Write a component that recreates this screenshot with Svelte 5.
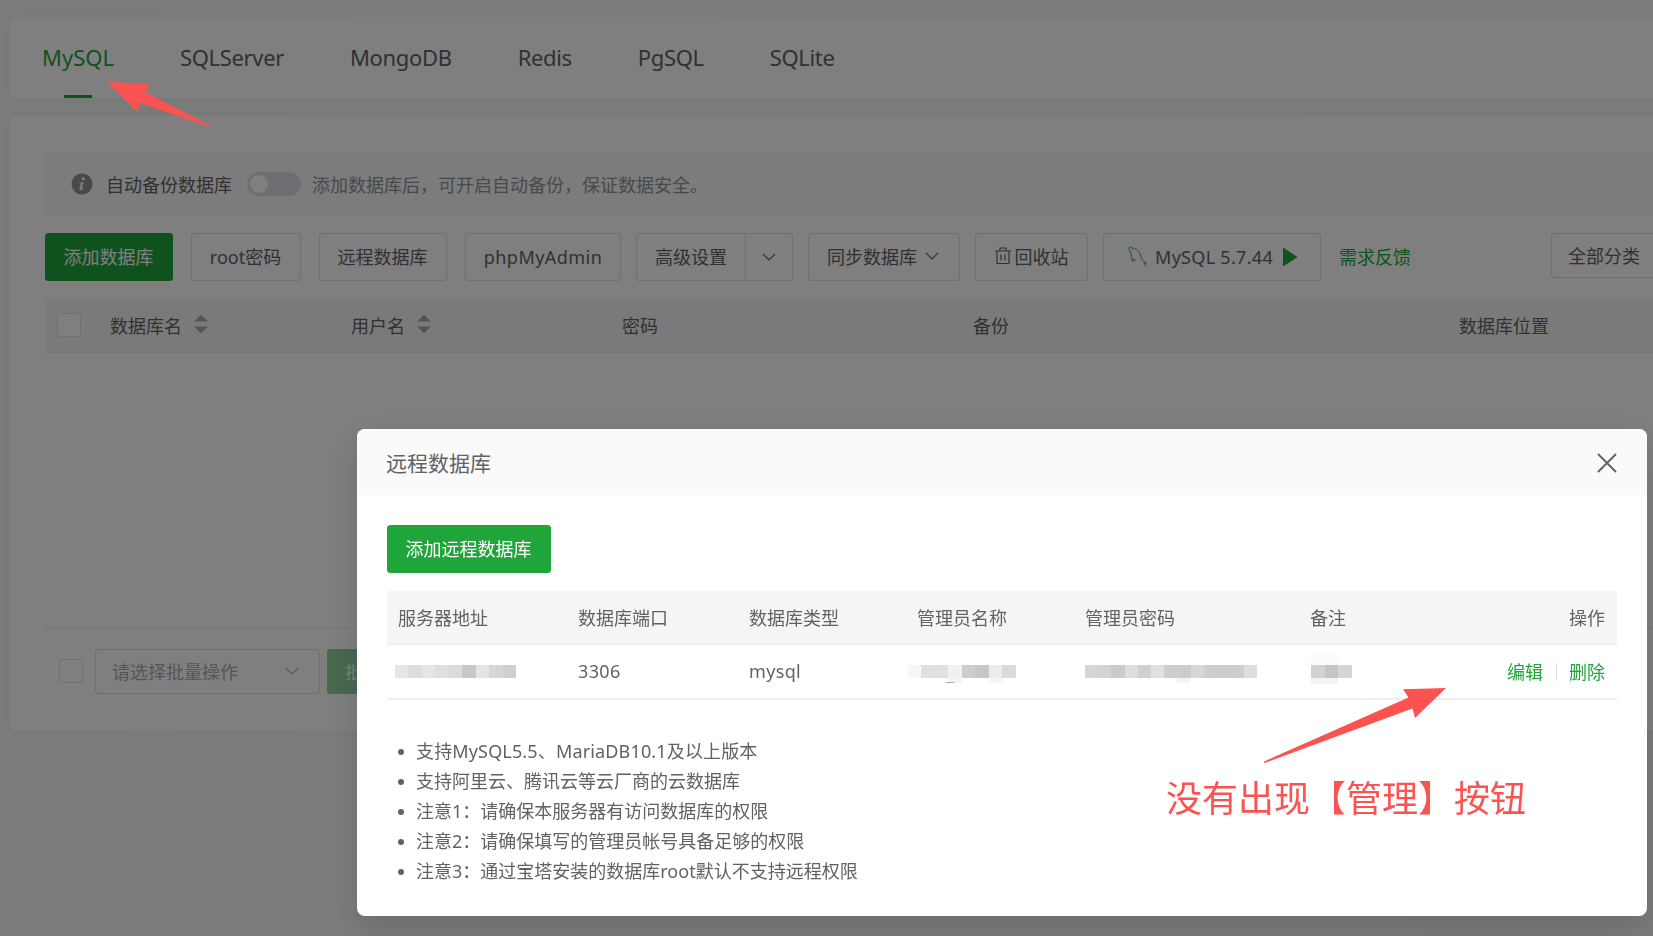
<script>
    let tabs = ['MySQL', 'SQLServer', 'MongoDB', 'Redis', 'PgSQL', 'SQLite'];
    let activeTab = 'MySQL';
    let autoBackup = false;
    let showRemote = true;

    let columns = [
        { label: '数据库名', sort: true },
        { label: '用户名', sort: true },
        { label: '密码' },
        { label: '备份' },
        { label: '数据库位置' }
    ];

    let remoteColumns = ['服务器地址', '数据库端口', '数据库类型', '管理员名称', '管理员密码', '备注', '操作'];

    // Masked values, one colour per block
    let maskHost = ['#e4e6e5', '#dddddd', '#e4e6e5', '#dfdfdf', '#dbdbdb', '#c8c8ca', '#e4e4e4', '#d6d6d6', '#cfd0d2'];
    let maskUser = ['#f7f7f7', '#dfe1e0', '#e0e2e1', '#f1f1f1', '#cccdcf', '#c6c7c9', '#eceeed', '#dadada'];
    let maskPass = ['#d5d6d8', '#d2d3d5', '#cacbcd', '#dddfde', '#d0d0d0', '#e0e0e0', '#cdcecf', '#cbccce', '#d6d7da', '#cdced0', '#cccdcf', '#cdced1', '#dddee0'];
    let maskNote = ['#d2d2d2', '#c4c5c7', '#d5d5d5'];

    let notes = [
        '支持MySQL5.5、MariaDB10.1及以上版本',
        '支持阿里云、腾讯云等云厂商的云数据库',
        '注意1：请确保本服务器有访问数据库的权限',
        '注意2：请确保填写的管理员帐号具备足够的权限',
        '注意3：通过宝塔安装的数据库root默认不支持远程权限'
    ];
</script>

{#snippet chevron()}
    <svg class="chevron" width="16" height="10" viewBox="0 0 16 10"><path d="M1.8 1.8 8 8l6.200-6.200" /></svg>
{/snippet}

{#snippet mask(cells)}
    <span class="mask">
        {#each cells as color}
            <i style={`background: ${color}`}></i>
        {/each}
    </span>
{/snippet}

<div class="page">
    <nav class="tabs">
        {#each tabs as tab}
            <button class="tab" class:active={tab === activeTab} on:click={() => (activeTab = tab)}>{tab}</button>
        {/each}
    </nav>

    <main class="panel">
        <div class="backup-bar">
            <svg class="info" width="22" height="22" viewBox="0 0 22 22">
                <circle cx="11" cy="11" r="10.500" />
                <circle class="mark" cx="12.300" cy="5.700" r="1.600" />
                <path class="mark" d="M8.300 9.400 12.700 8.900 11.100 15.100Q10.900 16 11.600 15.600L12.700 14.700 13.100 15.200Q11.300 17.400 9.500 17.300 8 17.100 8.500 15.200L9.700 10.500Q9.800 9.900 8.200 9.900Z" />
            </svg>
            <span class="backup-label">自动备份数据库</span>
            <span class="switch" class:on={autoBackup}></span>
            <span class="backup-hint">添加数据库后，可开启自动备份，保证数据安全。</span>
        </div>

        <div class="toolbar">
            <button class="btn primary add">添加数据库</button>
            <button class="btn root">root密码</button>
            <button class="btn remote">远程数据库</button>
            <button class="btn pma">phpMyAdmin</button>
            <div class="btn split">
                <span>高级设置</span>
                <span class="split-arrow">{@render chevron()}</span>
            </div>
            <button class="btn sync">同步数据库{@render chevron()}</button>
            <button class="btn bin">
                <svg class="trash" width="16" height="18" viewBox="0 0 16 18"><path d="M0 4h16M5 3.500V1h6v2.500M2 4v12.500h12V4M6 7.500v6M10 7.500v6" /></svg>
                回收站
            </button>
            <button class="btn version">
                <svg class="dolphin" width="20" height="21" viewBox="0 0 20 21">
                    <path d="M4.500 15.500C3.900 13.700 4 12 3.500 10.300 3 8.500 2.800 7 1.800 5.200 1.300 3.600.6 2.800 1.200 1.500 2.200.6 3.200 1.600 4.200 2.200 7.500 1.800 10 4.300 11.600 7.200 12.600 9.200 13 11.800 14.500 14 15.500 15.300 17.500 15.800 18.300 17.200L15.900 17.300 18.600 20.200M4.500 15.500 6.100 13 7.500 15.400M4.200 4.300 5 4.600" />
                </svg>
                <span>MySQL 5.7.44</span>
                <svg class="play" width="16" height="20" viewBox="0 0 16 20"><path d="M1 .5 15.500 10 1 19.500Z" /></svg>
            </button>
            <a class="feedback" href="#feedback">需求反馈</a>
            <div class="category">全部分类</div>
        </div>

        <div class="table-head">
            <span class="checkbox"></span>
            {#each columns as col}
                <span class="th">
                    {col.label}
                    {#if col.sort}
                        <svg class="sort" width="14" height="20" viewBox="0 0 14 20"><path d="M0 7.500 7 .5l7 7ZM0 12.500 7 19.500l7-7Z" /></svg>
                    {/if}
                </span>
            {/each}
        </div>
        <div class="table-empty"></div>

        <div class="batch">
            <span class="checkbox"></span>
            <div class="batch-select">请选择批量操作 {@render chevron()}</div>
            <button class="batch-btn">批量操作</button>
        </div>
    </main>
</div>

{#if showRemote}
    <div class="overlay">
        <div class="dialog">
            <header>
                <span>远程数据库</span>
                <svg class="close" width="20" height="20" viewBox="0 0 20 20"><path d="M1.500 1.500l17 17M18.500 1.500l-17 17" /></svg>
            </header>
            <div class="dialog-body">
                <button class="btn primary add-remote">添加远程数据库</button>

                <div class="row head">
                    {#each remoteColumns as label}
                        <span>{label}</span>
                    {/each}
                </div>
                <div class="row data">
                    <span class="cell-host">{@render mask(maskHost)}</span>
                    <span class="value">3306</span>
                    <span class="value">mysql</span>
                    <span class="cell-user">{@render mask(maskUser)}<i class="smudge s1"></i><i class="smudge s2"></i><i class="dash"></i></span>
                    <span class="cell-pass">{@render mask(maskPass)}<i class="smudge s3"></i></span>
                    <span class="cell-note">{@render mask(maskNote)}<i class="smudge s4"></i><i class="smudge s5"></i></span>
                    <span class="actions"><a href="#edit">编辑</a><i class="sep"></i><a href="#delete">删除</a></span>
                </div>

                <ul>
                    {#each notes as note}
                        <li>{note}</li>
                    {/each}
                </ul>
            </div>
        </div>
    </div>
{/if}

<div class="marks">
    <svg width="1653" height="936" viewBox="0 0 1653 936">
        <path d="M107 82 150 83.700 145 92 210.500 125.500 210 127 140 103 138 112Z" />
        <path d="M1446 688 1403 689.300 1408.500 697.500 1264 761.500 1264.500 763 1412.500 708.500 1415 718Z" />
    </svg>
    <span class="remark">没有出现【管理】按钮</span>
</div>

<style>
:global(body) {
    margin: 0;
    overflow: hidden;
    background: linear-gradient(90deg, #f3f8f6, #f7f8f7 30%, #f6f7f6);
    font-family: "Noto Sans", "Noto Sans CJK SC", sans-serif;
    font-size: 18px;
    color: #606266;
}

* {
    box-sizing: border-box;
}

button {
    font: inherit;
    color: inherit;
    background: none;
    border: 0;
    padding: 0;
    white-space: nowrap;
}

a {
    color: #20a53a;
    text-decoration: none;
}

svg {
    flex: none;
    fill: none;
}

.page {
    width: 1700px;
    height: 936px;
    padding: 17px 0 0 9px;
    overflow: hidden;
}

.tabs {
    display: flex;
    height: 81px;
    background: #fff;
    border-radius: 8px;
    box-shadow: 0 0 8px rgba(0, 0, 0, 0.04);
}
.tab {
    position: relative;
    padding: 0 33px 1px;
    font-size: 22px;
    letter-spacing: -0.34px;
}
.tab.active {
    color: #20a53a;
    letter-spacing: 0;
}
.tab.active::after {
    content: '';
    position: absolute;
    bottom: 0;
    left: 50%;
    width: 28px;
    height: 3px;
    margin-left: -14px;
    background: #20a53a;
}

.panel {
    height: 615px;
    margin-top: 18px;
    padding: 36px 0 0 36px;
    background: #fff;
    border-radius: 8px;
    box-shadow: 0 0 8px rgba(0, 0, 0, 0.04);
}

.backup-bar {
    display: flex;
    align-items: center;
    height: 63px;
    padding-left: 25px;
    background: #f8f8f8;
    border: 1px solid #eee;
    border-radius: 3px;
}
.info {
    margin-right: 13px;
    fill: #909399;
}
.info .mark {
    fill: #f8f8f8;
}
.switch {
    width: 54px;
    height: 24px;
    margin: 0 11px 0 15px;
    padding: 3px;
    background: #dcdfe6;
    border-radius: 12px;
}
.switch::after {
    content: '';
    display: block;
    width: 18px;
    height: 18px;
    background: #fff;
    border-radius: 50%;
}
.switch.on {
    background: #20a53a;
}
.backup-hint {
    color: #909399;
}

.toolbar {
    display: flex;
    height: 48px;
    margin-top: 18px;
}
.btn {
    display: flex;
    align-items: center;
    justify-content: center;
    height: 48px;
    margin-right: 15px;
    padding: 0 1px 2px 0;
    border: 1px solid #dcdfe6;
    border-radius: 3px;
}
.btn.primary {
    color: #fff;
    background: #20a53a;
    border-color: #20a53a;
}
.add {
    width: 128px;
    margin-right: 18px;
}
.root {
    width: 110px;
    margin-right: 18px;
}
.remote {
    width: 128px;
    margin-right: 18px;
}
.btn.pma {
    width: 156px;
    padding: 0;
    letter-spacing: 0.45px;
}
.split {
    width: 157px;
    justify-content: flex-start;
    padding-left: 18px;
}
.split-arrow {
    display: flex;
    align-items: center;
    justify-content: center;
    height: 48px;
    flex: 1;
    margin: 2px 0 0 18px;
    border-left: 1px solid #dcdfe6;
}
.sync {
    width: 152px;
    gap: 7px;
}
.btn.bin {
    width: 113px;
    padding-right: 0;
    gap: 4px;
}
.btn.version {
    width: 218px;
    gap: 7px;
    margin-right: 19px;
    padding: 0 0 1px 2px;
    letter-spacing: 0.3px;
}
.chevron {
    stroke: #606266;
    stroke-width: 1.2;
}
.trash {
    stroke: #606266;
    stroke-width: 1.2;
}
.dolphin {
    stroke: #3b87b5;
    stroke-width: 1;
}
.play {
    margin-left: 2px;
    fill: #20a53a;
}
.feedback {
    margin-left: -1px;
    line-height: 48px;
}
.category {
    width: 140px;
    height: 45px;
    margin-left: 140px;
    padding-left: 16px;
    line-height: 44px;
    border: 1px solid #dcdfe6;
    border-radius: 3px;
}

.table-head {
    display: grid;
    grid-template-columns: 65px 241px 271px 351px 486px 1fr;
    align-items: center;
    height: 54px;
    margin-top: 18px;
    padding-bottom: 2px;
    background: #f5f5f5;
    border-bottom: 1px solid #ebeef5;
}
.th {
    display: flex;
    align-items: center;
}
.sort {
    margin: 0 0 1px 12px;
    fill: #a8abb2;
}
.checkbox {
    width: 24px;
    height: 24px;
    margin-left: 12px;
    background: #fff;
    border: 1px solid #dcdfe6;
    border-radius: 3px;
}
.table-empty {
    height: 275px;
}

.batch {
    display: flex;
    align-items: center;
    height: 86px;
    border-top: 1px solid #ebeef5;
}
.batch .checkbox {
    margin: 0 0 2px 14px;
}
.batch-select {
    display: flex;
    align-items: center;
    justify-content: space-between;
    width: 225px;
    height: 45px;
    margin: 0 7px 0 12px;
    padding: 0 19px 2px 16px;
    color: #a8abb2;
    border: 1px solid #dcdfe6;
    border-radius: 3px;
}
.batch-select .chevron {
    stroke: #a8abb2;
}
.batch-btn {
    height: 45px;
    padding: 0 18px 2px;
    color: #fff;
    background: #90d29d;
    border-radius: 3px;
}

.overlay {
    position: fixed;
    inset: 0;
    padding: 429px 0 0 357px;
    background: rgba(0, 0, 0, 0.5);
}
.dialog {
    width: 1290px;
    height: 487px;
    background: #fff;
    border-radius: 8px;
    box-shadow: 0 12px 36px rgba(0, 0, 0, 0.14);
    overflow: hidden;
}
.dialog header {
    display: flex;
    align-items: center;
    justify-content: space-between;
    height: 66px;
    padding: 0 30px 0 29px;
    font-size: 21px;
    background: #fafafa;
}
.close {
    margin-top: 1px;
    stroke: #606266;
    stroke-width: 1.9;
    stroke-linecap: round;
}
.dialog-body {
    padding: 30px;
}
.add-remote {
    width: 164px;
    margin-bottom: 18px;
}

.row {
    display: grid;
    grid-template-columns: 180px 171px 168px 168px 225px 96px 1fr;
    align-items: center;
    padding: 0 12px 0 11px;
}
.row.head {
    height: 54px;
    padding-bottom: 2px;
    background: #f5f5f5;
    border-bottom: 1px solid #ebeef5;
}
.row.data {
    height: 55px;
    border-bottom: 2px solid #ebeef5;
}
.head span:last-child {
    text-align: right;
}
.value {
    padding: 0 0 2px;
    letter-spacing: 0.35px;
}
.mask {
    display: flex;
}
.mask i {
    width: 13.45px;
    height: 13px;
}
.cell-host,
.cell-user,
.cell-pass,
.cell-note {
    position: relative;
}
.cell-host {
    margin-left: -3px;
}
.cell-user {
    margin-left: -9px;
}
.cell-pass .mask i {
    width: 13.23px;
}
.cell-note {
    margin-left: 1px;
}
.cell-note .mask i {
    width: 13.65px;
}
.smudge {
    position: absolute;
    top: 13px;
    width: 14px;
    height: 5px;
    background: #f4f4f4;
}
.s1 {
    left: 40px;
}
.s2 {
    left: 81px;
}
.s3 {
    left: 91px;
}
.s4 {
    left: 0;
    width: 27px;
    height: 6px;
}
.s5 {
    top: -11px;
    left: 0;
    width: 27px;
    height: 11px;
    background: #fcfcfc;
}
.dash {
    position: absolute;
    top: 17px;
    left: 38px;
    width: 8px;
    height: 1px;
    background: #aaa;
}
.actions {
    display: flex;
    align-items: center;
    justify-content: flex-end;
    padding-bottom: 1px;
}
.sep {
    width: 1px;
    height: 18px;
    margin: 2px 12px 0 13px;
    background: #dcdfe6;
}

ul {
    margin: 36px 0 0;
    padding: 0 0 0 29px;
    line-height: 30px;
}
li {
    position: relative;
    list-style: none;
}
li:first-child {
    letter-spacing: 0.15px;
}
li::before {
    content: '';
    position: absolute;
    top: 13px;
    left: -18px;
    width: 6px;
    height: 6px;
    background: #606266;
    border-radius: 50%;
}

/* Hand drawn arrows and remark on top of everything */
.marks {
    position: fixed;
    inset: 0;
    pointer-events: none;
}
.marks path {
    fill: #fb5351;
}
.remark {
    position: absolute;
    top: 772px;
    left: 1166px;
    font-size: 36px;
    line-height: 54px;
    color: #fb5351;
    white-space: nowrap;
}
</style>
